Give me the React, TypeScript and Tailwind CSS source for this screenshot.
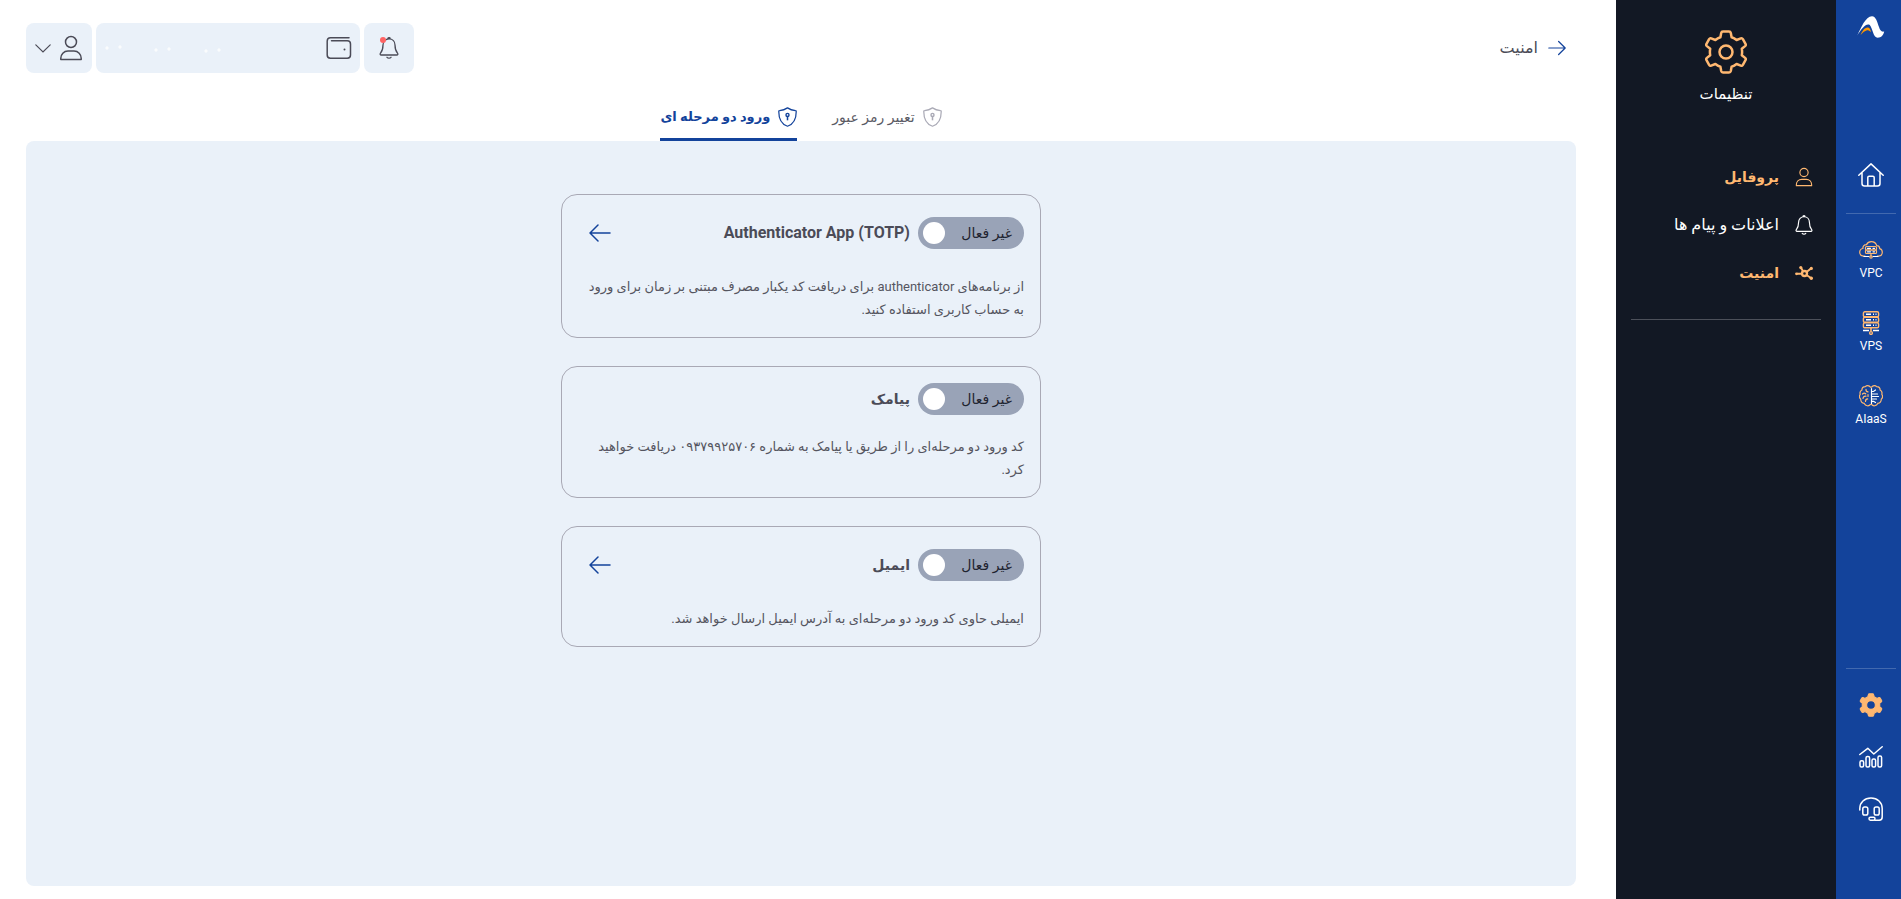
import React, { useState } from "react";
import clsx from "clsx";

type IconProps = { className?: string };

const UserIcon = ({ className }: IconProps) => (
  <svg viewBox="0 0 24 26" fill="none" stroke="currentColor" strokeWidth="1.500" strokeLinejoin="round" className={className}>
    <circle cx="12" cy="7" r="5.500" />
    <path d="M1.800 24.500v-1.200c0-4 3-7.200 7.200-7.200h6c4.200 0 7.200 3.200 7.200 7.200v1.200z" />
  </svg>
);

const BellIcon = ({ className }: IconProps) => (
  <svg viewBox="0 0 20 22" fill="none" stroke="currentColor" strokeWidth="1.300" strokeLinecap="round" strokeLinejoin="round" className={className}>
    <path d="M8.800 1.800a1.200 1.200 0 0 1 2.400 0M10 1.800c-3.600 0-6 2.700-6 6.200 0 4.500-.9 6.300-2.500 8.200-.7.900-.3 1.800.7 1.800h15.600c1 0 1.400-.9.700-1.800C16.900 14.300 16 12.500 16 8c0-3.500-2.400-6.200-6-6.200z" />
    <path d="M8 20.300c.9 1.100 3.100 1.100 4 0" />
  </svg>
);

const WalletIcon = ({ className }: IconProps) => (
  <svg viewBox="0 0 26 24" fill="none" stroke="currentColor" strokeWidth="1.500" strokeLinecap="round" className={className}>
    <path d="M23 1.800H4.500A3.300 3.300 0 0 0 1.200 5v14a3.200 3.200 0 0 0 3.200 3.200h16.900a3.200 3.200 0 0 0 3.200-3.200V8a3.200 3.200 0 0 0-3.200-3.200H5.500" />
    <circle cx="18.500" cy="13.500" r="1" fill="currentColor" stroke="none" />
  </svg>
);

const ShieldIcon = ({ className }: IconProps) => (
  <svg viewBox="0 0 20 21" fill="none" stroke="currentColor" strokeWidth="1.300" strokeLinejoin="round" className={className}>
    <path d="M10 .9C7.500 2.600 4.500 3.500 1.600 3.700c-.5 0-.8.4-.8.900C.8 12 3.200 17.800 10 20.200 16.800 17.800 19.200 12 19.200 4.600c0-.5-.3-.9-.8-.9C15.500 3.500 12.500 2.600 10 .9z" />
    <circle cx="10" cy="8.300" r="1.600" strokeWidth="1.500" />
    <path d="M10 10v4" strokeWidth="1.600" />
  </svg>
);

const ArrowIcon = ({ className }: IconProps) => (
  <svg viewBox="0 0 22 18" fill="none" stroke="currentColor" strokeWidth="1.500" strokeLinecap="round" strokeLinejoin="round" className={className}>
    <path d="M21 9H1M9 1L1 9l8 8" />
  </svg>
);

const GearOutline = ({ className }: IconProps) => (
  <svg viewBox="0 0 42 44" fill="none" stroke="currentColor" strokeWidth="2.500" strokeLinejoin="round" className={className}>
    <path d="M18 1.500h6c1 0 1.600.6 1.800 1.500l.8 4.300c2.200.6 3.600 1.500 5 2.700l4.200-1.600c.9-.3 1.600 0 2.100.8l2.600 4.600c.5.900.3 1.700-.4 2.300l-3.300 2.700c.4 2.100.4 4.300 0 6.400l3.300 2.700c.7.600.9 1.400.4 2.300l-2.600 4.600c-.5.800-1.200 1.100-2.100.8l-4.200-1.600c-1.400 1.200-2.800 2.100-5 2.700l-.8 4.300c-.2.900-.8 1.500-1.800 1.500h-6c-1 0-1.600-.6-1.800-1.500l-.8-4.300c-2.200-.6-3.600-1.500-5-2.700l-4.200 1.600c-.9.300-1.600 0-2.100-.8l-2.600-4.600c-.5-.9-.3-1.700.4-2.300l3.300-2.700c-.4-2.100-.4-4.300 0-6.400l-3.300-2.700c-.7-.6-.9-1.400-.4-2.300l2.600-4.600c.5-.8 1.200-1.100 2.100-.8l4.200 1.600c1.400-1.200 2.800-2.100 5-2.700l.8-4.300c.2-.9.800-1.500 1.800-1.500z" />
    <circle cx="21" cy="22" r="6.500" />
  </svg>
);

const GearSolid = ({ className }: IconProps) => (
  <svg viewBox="0 0 42 44" fill="currentColor" stroke="currentColor" strokeWidth="2" strokeLinejoin="round" className={className}>
    <path
      fillRule="evenodd"
      d="M18 1.500h6c1 0 1.600.6 1.800 1.500l1.300 4.500c2 .6 3.200 1.300 4.500 2.500l4.200-1.600c.9-.3 1.600 0 2.100.8l2.600 4.600c.5.900.3 1.700-.4 2.300l-3.300 2.700c.4 2.100.4 4.300 0 6.400l3.300 2.700c.7.600.9 1.400.4 2.300l-2.600 4.600c-.5.800-1.200 1.100-2.100.8l-4.200-1.600c-1.300 1.200-2.500 1.900-4.500 2.500l-1.300 4.500c-.2.900-.8 1.500-1.800 1.500h-6c-1 0-1.600-.6-1.800-1.500l-1.300-4.500c-2-.6-3.200-1.300-4.500-2.500l-4.200 1.600c-.9.300-1.600 0-2.100-.8l-2.600-4.600c-.5-.9-.3-1.700.4-2.300l3.300-2.700c-.4-2.100-.4-4.300 0-6.400l-3.300-2.700c-.7-.6-.9-1.400-.4-2.300l2.600-4.600c.5-.8 1.200-1.100 2.100-.8l4.200 1.600c1.300-1.200 2.500-1.900 4.500-2.500l1.300-4.500c.2-.9.800-1.500 1.800-1.500zM21 14a8 8 0 1 0 0 16 8 8 0 0 0 0-16z"
    />
  </svg>
);

const NetworkIcon = ({ className }: IconProps) => (
  <svg viewBox="0 0 18 14" fill="none" stroke="currentColor" strokeWidth="2" className={className}>
    <circle cx="9.500" cy="7.500" r="2.500" strokeWidth="2.400" />
    <path d="M2 7.800h5M6 1.800l2.200 3.700M11.500 6l4.500-3.500M11.500 9l4.500 3" />
    <circle cx="1.500" cy="7.800" r="1.400" fill="currentColor" stroke="none" />
    <circle cx="5.800" cy="1.600" r="1.600" fill="currentColor" stroke="none" />
    <circle cx="16.300" cy="2.400" r="1.600" fill="currentColor" stroke="none" />
    <circle cx="16.300" cy="12.200" r="1.700" fill="currentColor" stroke="none" />
  </svg>
);

const Logo = () => (
  <svg viewBox="0 0 28 22" className="h-[22px] w-7">
    <path
      d="M.2 19.500C4 12 8.500.3 15 .2c4 0 5.200 6 7 10.800 1.100 3.200 2.200 5.200 5.200 4.500-.7 3.500-3 6.200-6.500 6.200C16 21.500 16 13 12.800 9 8.500 6.800 4 14 .2 19.500z"
      fill="#fff"
    />
    <path d="M3.500 19c1.800-4 4-7.600 7-7.600 2.300 0 3.200 2.100 3.400 4.900-2-2-3.600-2.400-5.500-1.400C6.300 15.900 5 17.500 3.500 19z" fill="#ff9800" />
  </svg>
);

const HomeIcon = () => (
  <svg viewBox="0 0 26 24" fill="none" stroke="#fff" strokeWidth="1.500" strokeLinecap="round" strokeLinejoin="round" className="h-6 w-[26px]">
    <path d="M.8 12.200L13 .9l12.200 11.300M4 9.500v11a2.500 2.500 0 0 0 2.500 2.500h13a2.500 2.500 0 0 0 2.500-2.500v-11M9.800 23v-8.500c0-.8.500-1.300 1.300-1.300h3.800c.8 0 1.300.5 1.300 1.300V23" />
  </svg>
);

const VpcIcon = () => (
  <svg viewBox="0 0 24 18" fill="none" stroke="#ffb871" strokeWidth="1.200" strokeLinecap="round" className="h-[18px] w-6">
    <path d="M6 15.200H4.500C2.300 15 .7 13.300.7 11.300c0-2 1.300-3.500 3.200-3.800-.2-2.300 1.400-4 3.600-3.900C8.500 1.700 10.100.7 12.200.7c2.800 0 4.800 1.500 5.500 4 1.800 0 3 1.200 3 3 1.500.4 2.600 1.700 2.600 3.600 0 2.100-1.500 3.700-3.500 3.900H18.500" />
    <rect x="6.500" y="5.500" width="11" height="3.500" rx="1" />
    <rect x="6.500" y="9" width="11" height="3.500" rx="1" />
    <path d="M8.500 7.300h3M14 7.300h1.500M8.500 10.800h3M14 10.800h1.500M5 15.500h5M14 15.500h5" stroke="#fff" />
    <path d="M12 12.800v2" />
    <circle cx="12" cy="16" r="1.200" />
  </svg>
);

const VpsIcon = () => (
  <svg viewBox="0 0 18 24" fill="none" stroke="#ffb871" strokeWidth="1.400" className="h-6 w-[18px]">
    <rect x="1.400" y=".8" width="15.200" height="5" rx="1.400" />
    <rect x="1.400" y="6.300" width="15.200" height="5" rx="1.400" />
    <rect x="1.400" y="11.800" width="15.200" height="5" rx="1.400" />
    <path d="M4 3.300h5M11 3.300h1M13.500 3.300h1M4 8.800h5M11 8.800h1M13.500 8.800h1M4 14.300h5M11 14.300h1M13.500 14.300h1" stroke="#fff" />
    <path d="M1 19.500h6M11 19.500h6" stroke="#fff" />
    <path d="M9 17v3.500" strokeWidth="1.600" />
    <circle cx="9" cy="22" r="1.400" />
  </svg>
);

const BrainIcon = () => (
  <svg viewBox="0 0 24 22" fill="none" stroke="#ffb871" strokeWidth="1.200" strokeLinecap="round" className="h-[22px] w-6">
    <path d="M11.500 2.200C10 .3 7.700.2 6.300 1.700c-2 0-3.400 1.400-3.400 3.300C1.200 6 .7 7.700 1.200 9.200c-1 1.600-.8 3.700.5 5 .1 2.300 1.500 3.800 3.500 4.200 1.300 2.600 4.600 3.300 6.300 1" />
    <path d="M12.500 2.200C14 .3 16.300.2 17.700 1.700c2 0 3.400 1.400 3.400 3.300 1.700 1 2.200 2.700 1.700 4.200 1 1.600.8 3.700-.5 5-.1 2.300-1.500 3.800-3.500 4.200-1.300 2.600-4.600 3.300-6.300 1" />
    <path d="M7 4.300c-.2 1.500.6 2.400 2 2.600M3.500 9c1-1 2.300-1 3.200-.2M4 13.500c.2-1.600 1.300-2.500 3-2.300M6.500 16.500c-.2-1.500.7-2.500 2.200-2.700M9 9.500v2" />
    <path d="M12.500 3.500v15M12.500 6.500h2l2-1.500M12.500 9h6M12.500 11.500h7M12.500 14h5M12.500 16.300h2l2 1.200" stroke="#fff" />
  </svg>
);

const ChartIcon = () => (
  <svg viewBox="0 0 24 22" fill="none" stroke="#fff" strokeWidth="1.500" strokeLinecap="round" strokeLinejoin="round" className="h-[22px] w-6">
    <path d="M.8 8.500l8-6.200 6 5.700 8.400-7.200" />
    <rect x="1" y="14.800" width="3.600" height="6.200" rx="1.500" />
    <rect x="7" y="10.500" width="3.600" height="10.500" rx="1.500" />
    <rect x="13" y="13" width="3.600" height="8" rx="1.500" />
    <rect x="19" y="10" width="3.600" height="11" rx="1.500" />
  </svg>
);

const HeadsetIcon = () => (
  <svg viewBox="0 0 24 24" fill="none" stroke="#fff" strokeWidth="1.500" strokeLinecap="round" strokeLinejoin="round" className="size-6">
    <path d="M.8 13v-1.500C.8 5.500 5.500 1 12 1s11.200 4.500 11.200 10.500V20c0 2-1 3.200-3 3.200h-4.500" />
    <rect x="3.800" y="10" width="5" height="8" rx="1.800" />
    <rect x="15.200" y="10" width="5" height="8" rx="1.800" />
    <rect x="10" y="20.300" width="6" height="2.900" rx="1.400" />
  </svg>
);

const services = [
  { label: "VPC", icon: <VpcIcon /> },
  { label: "VPS", icon: <VpsIcon /> },
  { label: "AIaaS", icon: <BrainIcon /> },
];

const menu = [
  { label: "پروفایل", icon: <UserIcon className="h-5 w-[18px]" />, active: true },
  { label: "اعلانات و پیام ها", icon: <BellIcon className="h-5 w-[18px]" />, active: false },
  { label: "امنیت", icon: <NetworkIcon className="h-[14px] w-[18px]" />, active: true },
];

const tabs = [
  { id: "password", label: "تغییر رمز عبور" },
  { id: "twoStep", label: "ورود دو مرحله ای" },
];

const methods = [
  {
    id: "totp",
    title: "Authenticator App (TOTP)",
    latin: true,
    text: "از برنامه‌های authenticator برای دریافت کد یکبار مصرف مبتنی بر زمان برای ورود به حساب کاربری استفاده کنید.",
    hasDetails: true,
  },
  {
    id: "sms",
    title: "پیامک",
    latin: false,
    text: "کد ورود دو مرحله‌ای را از طریق یا پیامک به شماره ۰۹۳۷۹۹۲۵۷۰۶ دریافت خواهید کرد.",
    hasDetails: false,
  },
  {
    id: "email",
    title: "ایمیل",
    latin: false,
    text: "ایمیلی حاوی کد ورود دو مرحله‌ای به آدرس ایمیل ارسال خواهد شد.",
    hasDetails: true,
  },
];

const Rail = () => (
  <nav className="flex w-[65px] shrink-0 flex-col bg-[#13439b] pt-4 text-white">
    <a href="#" aria-label="Home page" className="flex justify-center pl-[5px]">
      <Logo />
    </a>
    <a href="#" aria-label="Dashboard" className="mt-[125px] flex justify-center pl-[5px]">
      <HomeIcon />
    </a>
    <hr className="mt-[26px] mr-[5px] ml-[10px] border-[#4269af]" />
    <div className="flex flex-col pt-[21px] pl-[5px]">
      {services.map((item) => (
        <a key={item.label} href="#" className="flex h-[73px] flex-col items-center text-xs">
          <span className="flex h-[30px] items-center">{item.icon}</span>
          <span className="leading-4">{item.label}</span>
        </a>
      ))}
    </div>
    <div className="mt-auto pb-[78px]">
      <hr className="mr-[5px] ml-[10px] border-[#4269af]" />
      <div className="flex flex-col items-center gap-[29px] pt-6 pl-[5px]">
        <a href="#" aria-label="Settings" className="text-[#ffb871]">
          <GearSolid className="size-6" />
        </a>
        <a href="#" aria-label="Reports">
          <ChartIcon />
        </a>
        <a href="#" aria-label="Support">
          <HeadsetIcon />
        </a>
      </div>
    </div>
  </nav>
);

const Sidebar = () => (
  <aside className="w-[220px] shrink-0 bg-[#121824] px-[15px] pt-[30px] text-white">
    <div className="flex flex-col items-center">
      <GearOutline className="h-11 w-[42px] text-[#ffb871]" />
      <h2 className="mt-2 text-[15px] leading-6">تنظیمات</h2>
    </div>
    <ul className="mt-[47px] flex flex-col pr-2">
      {menu.map((item) => (
        <li key={item.label}>
          <a
            href="#"
            className={clsx(
              "flex h-12 items-center gap-4",
              item.active ? "text-sm font-bold text-[#ffb871]" : "text-base"
            )}
          >
            {item.icon}
            <span>{item.label}</span>
          </a>
        </li>
      ))}
    </ul>
    <hr className="mt-[22px] border-[#4c505a]" />
  </aside>
);

const Header = () => (
  <header className="flex items-center justify-between">
    <a href="#" className="flex items-center gap-[10px] pr-[10px] text-base font-medium text-[#4b4b57]">
      <ArrowIcon className="h-4 w-[18px] rotate-180 text-[#13439b]" />
      <h1>امنیت</h1>
    </a>
    <div className="flex gap-1 text-[#4b4b57]">
      <button aria-label="Notifications" className="relative flex size-[50px] items-center justify-center rounded-lg bg-[#eaf1f9]">
        <BellIcon className="h-[22px] w-5" />
        <span className="absolute top-[14px] left-4 size-[6px] rounded-full bg-[#ff6464]" />
      </button>
      <button aria-label="Wallet" className="flex h-[50px] w-[264px] items-center justify-between rounded-lg bg-[#eaf1f9] px-2">
        <WalletIcon className="h-6 w-[26px]" />
        <svg viewBox="0 0 120 12" fill="#fff" className="h-3 w-[120px] opacity-80">
          <circle cx="3" cy="6" r="1.700" />
          <circle cx="16" cy="5" r="1.700" />
          <circle cx="52" cy="8" r="1.700" />
          <circle cx="65" cy="7" r="1.700" />
          <circle cx="102" cy="9" r="1.700" />
          <circle cx="115" cy="8" r="1.700" />
        </svg>
      </button>
      <button aria-label="Account" className="flex h-[50px] w-[66px] items-center justify-center gap-2 rounded-lg bg-[#eaf1f9]">
        <UserIcon className="h-[26px] w-6" />
        <svg viewBox="0 0 16 9" fill="none" stroke="currentColor" strokeWidth="1.200" strokeLinecap="round" className="h-[9px] w-4">
          <path d="M.8.8L8 8 15.200.8" />
        </svg>
      </button>
    </div>
  </header>
);

const App = () => {
  const [activeTab, setActiveTab] = useState("twoStep");
  const [enabled, setEnabled] = useState<Record<string, boolean>>({});

  const toggle = (id: string) => setEnabled((prev) => ({ ...prev, [id]: !prev[id] }));

  return (
    <div dir="rtl" lang="fa" className="flex min-h-screen bg-white font-[Roboto,'DejaVu_Sans',sans-serif]">
      <Rail />
      <Sidebar />
      <main className="flex min-w-0 flex-1 flex-col pt-[23px] pr-10 pb-[13px] pl-[26px]">
        <Header />

        {/* Tabs */}
        <div role="tablist" className="mt-6 flex justify-center gap-[35px]">
          {tabs.map((tab) => (
            <button
              key={tab.id}
              role="tab"
              aria-selected={activeTab === tab.id}
              onClick={() => setActiveTab(tab.id)}
              className={clsx(
                "flex h-11 items-center gap-2 border-b-3 pb-[2px]",
                activeTab === tab.id
                  ? "border-[#13439b] text-[13px] font-bold text-[#13439b]"
                  : "border-transparent text-sm text-[#5a5a64]"
              )}
            >
              <ShieldIcon className={clsx("h-5 w-[19px]", activeTab !== tab.id && "text-[#aaaab6]")} />
              {tab.label}
            </button>
          ))}
        </div>

        {/* Two step methods */}
        <section className="flex flex-1 flex-col items-center gap-7 rounded-lg bg-[#eaf1f9] pt-[53px] pb-8">
          {methods.map((method) => (
            <article key={method.id} className="w-[480px] max-w-full rounded-2xl border border-[#a9a9b5] p-4">
              <div className="flex items-center gap-2">
                <label className="flex h-8 w-[106px] shrink-0 cursor-pointer items-center justify-between rounded-full bg-[#99a3b7] pr-3 pl-[5px] text-sm text-[#1f2430]">
                  {enabled[method.id] ? "فعال" : "غیر فعال"}
                  <input
                    type="checkbox"
                    role="switch"
                    checked={!!enabled[method.id]}
                    onChange={() => toggle(method.id)}
                    className="size-[22px] cursor-pointer appearance-none rounded-full bg-white"
                  />
                </label>
                <h3 className={clsx("font-bold text-[#4b4b57]", method.latin ? "text-base" : "text-sm")}>
                  {method.title}
                </h3>
                {method.hasDetails && (
                  <button aria-label={method.title} className="mr-auto flex size-11 items-center justify-center text-[#13439b]">
                    <ArrowIcon className="h-[18px] w-[22px]" />
                  </button>
                )}
              </div>
              <p className="mt-5 text-[13px] leading-[23px] text-[#55555f]">{method.text}</p>
            </article>
          ))}
        </section>
      </main>
    </div>
  );
};

export default App;
